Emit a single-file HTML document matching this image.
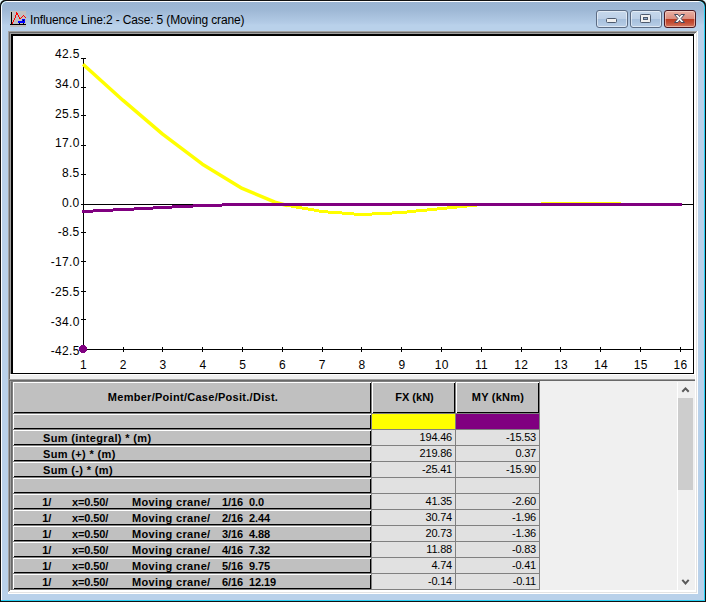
<!DOCTYPE html>
<html><head><meta charset="utf-8"><title>Influence Line</title>
<style>
html,body{margin:0;padding:0;background:#e6fbfc;}
body{width:706px;height:602px;overflow:hidden;position:relative;font-family:"Liberation Sans",sans-serif;}
.a{position:absolute;}
#win{position:absolute;left:0;top:0;width:706px;height:602px;background:#e6fbfc;overflow:hidden;}
#ttl{left:2px;top:2px;width:702px;height:29px;background:linear-gradient(#9ab4d2 0,#9eb8d5 8px,#b3cbe6 21px,#b9d1ea 23px);}
.t{position:absolute;white-space:pre;line-height:1;}
.g{font-size:12px;color:#000;letter-spacing:0.3px;}
.hb{font-size:11px;font-weight:bold;color:#000;letter-spacing:0.35px;}
.dv{font-size:11px;color:#000;text-align:right;letter-spacing:-0.2px;}
.rh{left:13px;width:358px;height:15px;}
</style></head><body>
<div id="win">

<div class="a" style="left:0;top:0;width:706px;height:602px;background:#111;border-radius:5px 5px 0 0;"></div>
<div class="a" style="left:1px;top:1px;width:704px;height:600px;background:#2ad0f4;border-radius:6px 6px 0 0;"></div>
<div class="a" style="left:1px;top:1px;width:703px;height:599px;background:#fdfeff;border-radius:6px 6px 0 0;"></div>
<div class="a" style="left:2px;top:2px;width:702px;height:598px;background:#b9d1ea;border-radius:5px 5px 0 0;"></div>
<div class="a" id="ttl" style="border-radius:5px 5px 0 0;"></div>
<svg class="a" style="left:10px;top:11px" width="16" height="16" viewBox="0 0 16 16" shape-rendering="crispEdges">
<rect width="16" height="16" fill="#c0c0c0"/>
<rect x="1" y="1" width="1" height="13" fill="#000"/><rect x="0" y="13" width="16" height="1" fill="#000"/>
<rect x="2" y="12" width="1" height="1" fill="#f00"/>
<rect x="2" y="11" width="1" height="1" fill="#f00"/>
<rect x="3" y="9" width="1" height="2" fill="#f00"/>
<rect x="4" y="7" width="1" height="2" fill="#f00"/>
<rect x="5" y="4" width="1" height="3" fill="#f00"/>
<rect x="6" y="1" width="1" height="3" fill="#f00"/>
<rect x="7" y="2" width="1" height="2" fill="#f00"/>
<rect x="8" y="4" width="1" height="2" fill="#f00"/>
<rect x="9" y="6" width="1" height="2" fill="#f00"/>
<rect x="10" y="7" width="1" height="1" fill="#f00"/>
<rect x="11" y="6" width="1" height="1" fill="#f00"/>
<rect x="12" y="5" width="1" height="1" fill="#f00"/>
<rect x="13" y="4" width="1" height="1" fill="#f00"/>
<rect x="14" y="5" width="1" height="1" fill="#f00"/>
<rect x="15" y="6" width="1" height="1" fill="#f00"/>
<rect x="8" y="10" width="7" height="2" fill="#00f"/><rect x="12" y="8" width="3" height="2" fill="#00f"/>
<rect x="13" y="9" width="1" height="1" fill="#000"/><rect x="9" y="12" width="1" height="1" fill="#000"/><rect x="13" y="12" width="1" height="1" fill="#000"/>
</svg>
<div class="t" id="title" style="left:30px;top:14px;font-size:12px;color:#000;letter-spacing:-0.14px;">Influence Line:2 - Case: 5 (Moving crane)</div>
<div class="a" style="left:596px;top:10px;width:30px;height:16px;border:1px solid #5c6c84;border-radius:3px;background:linear-gradient(#c6d8ec 0,#bdd0e7 47%,#a6bfdc 50%,#aec6e1 75%,#bbd0e8 100%);box-shadow:inset 0 0 0 1px rgba(255,255,255,.5);"></div>
<div class="a" style="left:630px;top:10px;width:30px;height:16px;border:1px solid #5c6c84;border-radius:3px;background:linear-gradient(#c6d8ec 0,#bdd0e7 47%,#a6bfdc 50%,#aec6e1 75%,#bbd0e8 100%);box-shadow:inset 0 0 0 1px rgba(255,255,255,.5);"></div>
<div class="a" style="left:664px;top:10px;width:30px;height:16px;border:1px solid #4a1822;border-radius:3px;background:linear-gradient(#e9b0a4 0,#dc8e7f 47%,#ba3a20 50%,#c55038 75%,#d37a62 100%);box-shadow:inset 0 0 0 1px rgba(255,225,215,.55);"></div>
<svg class="a" style="left:596px;top:10px" width="100" height="18" viewBox="0 0 100 18">
<rect x="10.5" y="8.5" width="10" height="4" rx="1" fill="#f0f0f0" stroke="#4d5a6e" stroke-width="1"/>
<rect x="44.5" y="4.5" width="10" height="8" rx="0.8" fill="#f0f0f0" stroke="#4d5a6e" stroke-width="1"/><rect x="47.5" y="7.5" width="4" height="2" fill="#8fa8c8" stroke="#4d5a6e" stroke-width="1"/>
<path d="M78.5 4.5 h3.5 l1.5 2 l1.5 -2 h3.5 l-3.4 4 l3.4 4 h-3.5 l-1.5 -2 l-1.5 2 h-3.5 l3.4 -4 z" fill="#f6f6f6" stroke="#444a5e" stroke-width="1" stroke-linejoin="round"/>
</svg>
<div class="a" style="left:8px;top:31px;width:690px;height:563px;background:#fff;"></div>
<div class="a" style="left:696px;top:32px;width:1px;height:561px;background:#e3e3e3;"></div>
<div class="a" style="left:9px;top:592px;width:688px;height:1px;background:#e3e3e3;"></div>
<div class="a" style="left:8px;top:31px;width:689px;height:1px;background:#a0a0a0;"></div>
<div class="a" style="left:9px;top:32px;width:687px;height:1px;background:#696969;"></div>
<div class="a" style="left:10px;top:33px;width:685px;height:1px;background:#a0a0a0;"></div>
<div class="a" style="left:10px;top:33px;width:1px;height:341px;background:#a0a0a0;"></div>
<div class="a" style="left:11px;top:34px;width:683px;height:340px;background:#000;"></div>
<div class="a" style="left:13px;top:36px;width:680px;height:337px;background:#fff;"></div>
<div class="a" style="left:8px;top:31px;width:1px;height:561px;background:#a0a0a0;"></div>
<div class="a" style="left:9px;top:32px;width:1px;height:559px;background:#696969;"></div>
<div class="a" style="left:10px;top:374px;width:685px;height:5px;background:#f0f0f0;border-top:1px solid #fff;box-sizing:border-box;"></div>
<svg class="a" style="left:0;top:0" width="706" height="602" viewBox="0 0 706 602">
<g shape-rendering="crispEdges" fill="#000">
<rect x="83" y="58" width="1" height="292"/>
<rect x="83" y="349" width="610" height="1"/>
<rect x="83" y="204" width="610" height="1"/>
<rect x="81" y="58" width="5" height="1"/>
<rect x="81" y="87" width="5" height="1"/>
<rect x="81" y="115" width="5" height="1"/>
<rect x="81" y="145" width="5" height="1"/>
<rect x="81" y="174" width="5" height="1"/>
<rect x="81" y="204" width="5" height="1"/>
<rect x="81" y="232" width="5" height="1"/>
<rect x="81" y="261" width="5" height="1"/>
<rect x="81" y="291" width="5" height="1"/>
<rect x="81" y="319" width="5" height="1"/>
<rect x="81" y="349" width="5" height="1"/>
<rect x="83" y="347" width="1" height="5"/>
<rect x="123" y="347" width="1" height="5"/>
<rect x="162" y="347" width="1" height="5"/>
<rect x="202" y="347" width="1" height="5"/>
<rect x="242" y="347" width="1" height="5"/>
<rect x="282" y="347" width="1" height="5"/>
<rect x="322" y="347" width="1" height="5"/>
<rect x="361" y="347" width="1" height="5"/>
<rect x="401" y="347" width="1" height="5"/>
<rect x="441" y="347" width="1" height="5"/>
<rect x="481" y="347" width="1" height="5"/>
<rect x="521" y="347" width="1" height="5"/>
<rect x="560" y="347" width="1" height="5"/>
<rect x="600" y="347" width="1" height="5"/>
<rect x="640" y="347" width="1" height="5"/>
<rect x="680" y="347" width="1" height="5"/>
</g>
<polyline fill="none" stroke="#ff0" stroke-width="3.5" stroke-linejoin="round" points="83,64.2 122.8,100.2 162.6,134.2 202.4,164.2 242.2,188.4 275,202.2 287,205.5"/>
<g shape-rendering="crispEdges" fill="#ff0">
<rect x="286" y="204" width="5" height="3"/>
<rect x="291" y="205" width="5" height="3"/>
<rect x="296" y="206" width="6" height="3"/>
<rect x="302" y="207" width="6" height="3"/>
<rect x="308" y="208" width="6" height="3"/>
<rect x="314" y="209" width="5" height="3"/>
<rect x="319" y="210" width="9" height="3"/>
<rect x="328" y="211" width="14" height="3"/>
<rect x="342" y="212" width="12" height="3"/>
<rect x="354" y="213" width="18" height="3"/>
<rect x="372" y="212" width="20" height="3"/>
<rect x="392" y="211" width="15" height="3"/>
<rect x="407" y="210" width="9" height="3"/>
<rect x="416" y="209" width="11" height="3"/>
<rect x="427" y="208" width="10" height="3"/>
<rect x="437" y="207" width="10" height="3"/>
<rect x="447" y="206" width="10" height="3"/>
<rect x="457" y="205" width="10" height="3"/>
<rect x="467" y="204" width="10" height="3"/>
<rect x="477" y="203" width="64" height="3"/>
<rect x="541" y="202" width="80" height="3"/>
<rect x="621" y="203" width="60" height="3"/>
</g>
<g shape-rendering="crispEdges" fill="#800080">
<rect x="82" y="210" width="11" height="3"/>
<rect x="93" y="209" width="20" height="3"/>
<rect x="113" y="208" width="21" height="3"/>
<rect x="134" y="207" width="19" height="3"/>
<rect x="153" y="206" width="19" height="3"/>
<rect x="172" y="205" width="21" height="3"/>
<rect x="193" y="204" width="29" height="3"/>
<rect x="222" y="203" width="460" height="3"/>
</g>
<path d="M81 345h4v1h1v1h1v4h-1v1h-1v1h-4v-1h-1v-1h-1v-4h1v-1h1z" fill="#800080" shape-rendering="crispEdges"/>
</svg>
<div class="t g" style="right:626.4px;top:48.2px;">42.5</div>
<div class="t g" style="right:626.4px;top:78.0px;">34.0</div>
<div class="t g" style="right:626.4px;top:107.7px;">25.5</div>
<div class="t g" style="right:626.4px;top:137.3px;">17.0</div>
<div class="t g" style="right:626.4px;top:167.1px;">8.5</div>
<div class="t g" style="right:626.4px;top:196.8px;">0.0</div>
<div class="t g" style="right:626.4px;top:226.4px;">-8.5</div>
<div class="t g" style="right:626.4px;top:256.1px;">-17.0</div>
<div class="t g" style="right:626.4px;top:285.9px;">-25.5</div>
<div class="t g" style="right:626.4px;top:315.6px;">-34.0</div>
<div class="t g" style="right:626.4px;top:345.2px;">-42.5</div>
<div class="t g" style="left:63.5px;width:40px;text-align:center;top:359px;">1</div>
<div class="t g" style="left:103.3px;width:40px;text-align:center;top:359px;">2</div>
<div class="t g" style="left:143.1px;width:40px;text-align:center;top:359px;">3</div>
<div class="t g" style="left:182.9px;width:40px;text-align:center;top:359px;">4</div>
<div class="t g" style="left:222.7px;width:40px;text-align:center;top:359px;">5</div>
<div class="t g" style="left:262.5px;width:40px;text-align:center;top:359px;">6</div>
<div class="t g" style="left:302.3px;width:40px;text-align:center;top:359px;">7</div>
<div class="t g" style="left:342.1px;width:40px;text-align:center;top:359px;">8</div>
<div class="t g" style="left:381.9px;width:40px;text-align:center;top:359px;">9</div>
<div class="t g" style="left:421.7px;width:40px;text-align:center;top:359px;">10</div>
<div class="t g" style="left:461.5px;width:40px;text-align:center;top:359px;">11</div>
<div class="t g" style="left:501.3px;width:40px;text-align:center;top:359px;">12</div>
<div class="t g" style="left:541.1px;width:40px;text-align:center;top:359px;">13</div>
<div class="t g" style="left:580.9px;width:40px;text-align:center;top:359px;">14</div>
<div class="t g" style="left:620.7px;width:40px;text-align:center;top:359px;">15</div>
<div class="t g" style="left:660.5px;width:40px;text-align:center;top:359px;">16</div>
<div class="a" style="left:8px;top:379px;width:687px;height:1px;background:#a0a0a0;"></div>
<div class="a" style="left:9px;top:380px;width:686px;height:1px;background:#696969;"></div>
<div class="a" style="left:11px;top:381px;width:2px;height:209px;background:#696969;"></div>
<div class="a" style="left:10px;top:381px;width:1px;height:209px;background:#a0a0a0;"></div>
<div class="a" style="left:11px;top:381px;width:529px;height:1px;background:#808080;"></div>
<div class="a" style="left:540px;top:381px;width:155px;height:209px;background:#f0f0f0;"></div>
<div class="a" style="left:13px;top:382px;width:527px;height:208px;background:#f0f0f0;"></div>
<div class="a" style="left:12px;top:381px;width:528px;height:209px;background:#808080;"></div>
<div class="a" style="left:13px;top:382px;width:358px;height:31px;background:#c0c0c0;box-shadow:inset 1px 1px 0 #fff,inset -1px -1px 0 #000;"></div>
<div class="a" style="left:372px;top:382px;width:83px;height:31px;background:#c0c0c0;box-shadow:inset 1px 1px 0 #fff,inset -1px -1px 0 #000;"></div>
<div class="a" style="left:456px;top:382px;width:83px;height:31px;background:#c0c0c0;box-shadow:inset 1px 1px 0 #fff,inset -1px -1px 0 #000;"></div>
<div class="t hb" style="left:15px;width:356px;text-align:center;top:392px;letter-spacing:0.28px;">Member/Point/Case/Posit./Dist.</div>
<div class="t hb" style="left:374px;width:81px;text-align:center;top:392px;letter-spacing:0;">FX (kN)</div>
<div class="t hb" style="left:457.5px;width:81px;text-align:center;top:392px;letter-spacing:0.25px;">MY (kNm)</div>
<div class="a" style="left:13px;top:414px;width:358px;height:15px;background:#c0c0c0;box-shadow:inset 1px 1px 0 #fff,inset -1px -1px 0 #000;"></div>
<div class="a" style="left:372px;top:414px;width:83px;height:15px;background:#ff0;"></div>
<div class="a" style="left:456px;top:414px;width:83px;height:15px;background:#800080;"></div>
<div class="a" style="left:13px;top:430px;width:358px;height:15px;background:#c0c0c0;box-shadow:inset 1px 1px 0 #fff,inset -1px -1px 0 #000;"></div>
<div class="a" style="left:372px;top:430px;width:83px;height:15px;background:#e1e1e1;"></div>
<div class="a" style="left:456px;top:430px;width:83px;height:15px;background:#e1e1e1;"></div>
<div class="t hb" style="left:43px;top:433px;">Sum (integral) * (m)</div>
<div class="t dv" style="left:372px;width:80px;top:432px;">194.46</div>
<div class="t dv" style="left:456px;width:80px;top:432px;">-15.53</div>
<div class="a" style="left:13px;top:446px;width:358px;height:15px;background:#c0c0c0;box-shadow:inset 1px 1px 0 #fff,inset -1px -1px 0 #000;"></div>
<div class="a" style="left:372px;top:446px;width:83px;height:15px;background:#e1e1e1;"></div>
<div class="a" style="left:456px;top:446px;width:83px;height:15px;background:#e1e1e1;"></div>
<div class="t hb" style="left:43px;top:449px;">Sum (+) * (m)</div>
<div class="t dv" style="left:372px;width:80px;top:448px;">219.86</div>
<div class="t dv" style="left:456px;width:80px;top:448px;">0.37</div>
<div class="a" style="left:13px;top:462px;width:358px;height:15px;background:#c0c0c0;box-shadow:inset 1px 1px 0 #fff,inset -1px -1px 0 #000;"></div>
<div class="a" style="left:372px;top:462px;width:83px;height:15px;background:#e1e1e1;"></div>
<div class="a" style="left:456px;top:462px;width:83px;height:15px;background:#e1e1e1;"></div>
<div class="t hb" style="left:43px;top:465px;">Sum (-) * (m)</div>
<div class="t dv" style="left:372px;width:80px;top:464px;">-25.41</div>
<div class="t dv" style="left:456px;width:80px;top:464px;">-15.90</div>
<div class="a" style="left:13px;top:478px;width:358px;height:15px;background:#c0c0c0;box-shadow:inset 1px 1px 0 #fff,inset -1px -1px 0 #000;"></div>
<div class="a" style="left:372px;top:478px;width:83px;height:15px;background:#e1e1e1;"></div>
<div class="a" style="left:456px;top:478px;width:83px;height:15px;background:#e1e1e1;"></div>
<div class="a" style="left:13px;top:494px;width:358px;height:15px;background:#c0c0c0;box-shadow:inset 1px 1px 0 #fff,inset -1px -1px 0 #000;"></div>
<div class="a" style="left:372px;top:494px;width:83px;height:15px;background:#e1e1e1;"></div>
<div class="a" style="left:456px;top:494px;width:83px;height:15px;background:#e1e1e1;"></div>
<div class="t hb" style="left:42.2px;top:497px;letter-spacing:-0.1px;">1/</div>
<div class="t hb" style="left:72px;top:497px;letter-spacing:-0.1px;">x=0.50/</div>
<div class="t hb" style="left:132px;top:497px;">Moving crane/</div>
<div class="t hb" style="left:222px;top:497px;letter-spacing:-0.1px;">1/16</div>
<div class="t hb" style="left:249px;top:497px;letter-spacing:-0.1px;">0.0</div>
<div class="t dv" style="left:372px;width:80px;top:496px;">41.35</div>
<div class="t dv" style="left:456px;width:80px;top:496px;">-2.60</div>
<div class="a" style="left:13px;top:510px;width:358px;height:15px;background:#c0c0c0;box-shadow:inset 1px 1px 0 #fff,inset -1px -1px 0 #000;"></div>
<div class="a" style="left:372px;top:510px;width:83px;height:15px;background:#e1e1e1;"></div>
<div class="a" style="left:456px;top:510px;width:83px;height:15px;background:#e1e1e1;"></div>
<div class="t hb" style="left:42.2px;top:513px;letter-spacing:-0.1px;">1/</div>
<div class="t hb" style="left:72px;top:513px;letter-spacing:-0.1px;">x=0.50/</div>
<div class="t hb" style="left:132px;top:513px;">Moving crane/</div>
<div class="t hb" style="left:222px;top:513px;letter-spacing:-0.1px;">2/16</div>
<div class="t hb" style="left:249px;top:513px;letter-spacing:-0.1px;">2.44</div>
<div class="t dv" style="left:372px;width:80px;top:512px;">30.74</div>
<div class="t dv" style="left:456px;width:80px;top:512px;">-1.96</div>
<div class="a" style="left:13px;top:526px;width:358px;height:15px;background:#c0c0c0;box-shadow:inset 1px 1px 0 #fff,inset -1px -1px 0 #000;"></div>
<div class="a" style="left:372px;top:526px;width:83px;height:15px;background:#e1e1e1;"></div>
<div class="a" style="left:456px;top:526px;width:83px;height:15px;background:#e1e1e1;"></div>
<div class="t hb" style="left:42.2px;top:529px;letter-spacing:-0.1px;">1/</div>
<div class="t hb" style="left:72px;top:529px;letter-spacing:-0.1px;">x=0.50/</div>
<div class="t hb" style="left:132px;top:529px;">Moving crane/</div>
<div class="t hb" style="left:222px;top:529px;letter-spacing:-0.1px;">3/16</div>
<div class="t hb" style="left:249px;top:529px;letter-spacing:-0.1px;">4.88</div>
<div class="t dv" style="left:372px;width:80px;top:528px;">20.73</div>
<div class="t dv" style="left:456px;width:80px;top:528px;">-1.36</div>
<div class="a" style="left:13px;top:542px;width:358px;height:15px;background:#c0c0c0;box-shadow:inset 1px 1px 0 #fff,inset -1px -1px 0 #000;"></div>
<div class="a" style="left:372px;top:542px;width:83px;height:15px;background:#e1e1e1;"></div>
<div class="a" style="left:456px;top:542px;width:83px;height:15px;background:#e1e1e1;"></div>
<div class="t hb" style="left:42.2px;top:545px;letter-spacing:-0.1px;">1/</div>
<div class="t hb" style="left:72px;top:545px;letter-spacing:-0.1px;">x=0.50/</div>
<div class="t hb" style="left:132px;top:545px;">Moving crane/</div>
<div class="t hb" style="left:222px;top:545px;letter-spacing:-0.1px;">4/16</div>
<div class="t hb" style="left:249px;top:545px;letter-spacing:-0.1px;">7.32</div>
<div class="t dv" style="left:372px;width:80px;top:544px;">11.88</div>
<div class="t dv" style="left:456px;width:80px;top:544px;">-0.83</div>
<div class="a" style="left:13px;top:558px;width:358px;height:15px;background:#c0c0c0;box-shadow:inset 1px 1px 0 #fff,inset -1px -1px 0 #000;"></div>
<div class="a" style="left:372px;top:558px;width:83px;height:15px;background:#e1e1e1;"></div>
<div class="a" style="left:456px;top:558px;width:83px;height:15px;background:#e1e1e1;"></div>
<div class="t hb" style="left:42.2px;top:561px;letter-spacing:-0.1px;">1/</div>
<div class="t hb" style="left:72px;top:561px;letter-spacing:-0.1px;">x=0.50/</div>
<div class="t hb" style="left:132px;top:561px;">Moving crane/</div>
<div class="t hb" style="left:222px;top:561px;letter-spacing:-0.1px;">5/16</div>
<div class="t hb" style="left:249px;top:561px;letter-spacing:-0.1px;">9.75</div>
<div class="t dv" style="left:372px;width:80px;top:560px;">4.74</div>
<div class="t dv" style="left:456px;width:80px;top:560px;">-0.41</div>
<div class="a" style="left:13px;top:574px;width:358px;height:15px;background:#c0c0c0;box-shadow:inset 1px 1px 0 #fff,inset -1px -1px 0 #000;"></div>
<div class="a" style="left:372px;top:574px;width:83px;height:15px;background:#e1e1e1;"></div>
<div class="a" style="left:456px;top:574px;width:83px;height:15px;background:#e1e1e1;"></div>
<div class="t hb" style="left:42.2px;top:577px;letter-spacing:-0.1px;">1/</div>
<div class="t hb" style="left:72px;top:577px;letter-spacing:-0.1px;">x=0.50/</div>
<div class="t hb" style="left:132px;top:577px;">Moving crane/</div>
<div class="t hb" style="left:222px;top:577px;letter-spacing:-0.1px;">6/16</div>
<div class="t hb" style="left:249px;top:577px;letter-spacing:-0.1px;">12.19</div>
<div class="t dv" style="left:372px;width:80px;top:576px;">-0.14</div>
<div class="t dv" style="left:456px;width:80px;top:576px;">-0.11</div>
<div class="a" style="left:677px;top:382px;width:1px;height:208px;background:#fff;"></div>
<div class="a" style="left:678px;top:398px;width:15px;height:92px;background:#cdcdcd;"></div>
<svg class="a" style="left:678px;top:382px" width="15" height="208" viewBox="0 0 15 208"><path d="M4.3 9.8 L7.5 6.4 L10.7 9.8" fill="none" stroke="#5a5a5a" stroke-width="2"/><path d="M4.3 197.9 L7.5 201.4 L10.7 197.9" fill="none" stroke="#5a5a5a" stroke-width="2"/></svg>
</div></body></html>
